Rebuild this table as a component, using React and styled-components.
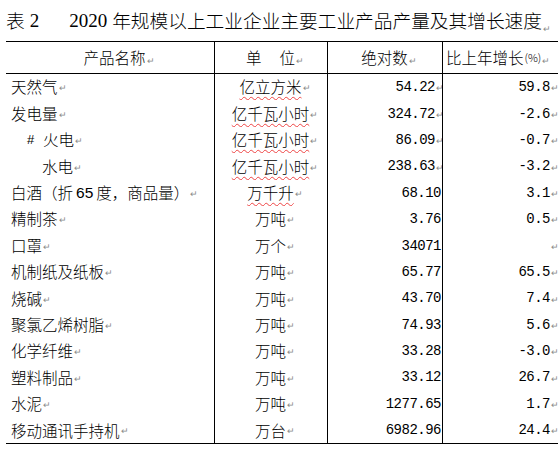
import styled, { createGlobalStyle } from "styled-components";

const GlobalStyle = createGlobalStyle`
  html, body {
    margin: 0;
    padding: 0;
    background: #fff;
    overflow: hidden;
  }
  body {
    font-family: "Noto Sans CJK SC", "Noto Sans", sans-serif;
    font-weight: 300;
    color: #000;
  }
`;

const Page = styled.div`
  width: 558px;
  height: 451px;
  padding-left: 6px;
  box-sizing: border-box;
  overflow: hidden;
`;

const Title = styled.h1`
  margin: 0;
  height: 41px;
  display: flex;
  align-items: center;
  font-size: 18.7px;
  font-weight: 300;
  line-height: 1;
  white-space: nowrap;
`;

const TitleNum = styled.span`
  font-family: "Liberation Serif", serif;
  font-size: 19px;
  margin: 0 ${(p) => p.$after}px 0 ${(p) => p.$before}px;
`;

const Table = styled.div`
  display: grid;
  grid-template-columns: 208px 113px 115px 118px;
  grid-template-rows: 32px;
  grid-auto-rows: 26.4px;
  width: max-content;
  border-top: 1px solid #000;
  border-bottom: 1px solid #000;
`;

const Cell = styled.div`
  display: flex;
  align-items: center;
  justify-content: ${(p) =>
    p.$align === "right" ? "flex-end" : p.$align === "center" ? "center" : "flex-start"};
  box-sizing: border-box;
  border-left: ${(p) => (p.$first ? "none" : "1px solid #000")};
  padding: 0 ${(p) => p.$pr || 0}px 0 ${(p) => p.$pl || 0}px;
  font-size: 15.5px;
  line-height: 1;
  white-space: nowrap;
  overflow: hidden;
`;

const HeadCell = styled(Cell)`
  border-bottom: 1px solid #000;
`;

const Num = styled.span`
  font-family: "Liberation Mono", monospace;
  font-weight: 400;
  font-size: 14px;
  letter-spacing: -0.5px;
`;

const Latin = styled.span`
  font-family: "Liberation Sans", sans-serif;
  margin: 0 3px;
`;

const Small = styled.span`
  font-size: 11px;
  margin-left: 1px;
`;

const Gap = styled.span`
  display: inline-block;
  width: ${(p) => p.$w}px;
`;

const Hash = styled.span`
  display: inline-block;
  width: 16px;
  font-family: "Liberation Sans", sans-serif;
  font-size: 13px;
`;

const Wavy = styled.span`
  text-decoration: underline wavy #e44;
  text-decoration-thickness: 1px;
  text-underline-offset: 3px;
  text-decoration-skip-ink: none;
`;

const Mark = styled.span`
  display: inline-block;
  width: ${(p) => p.$w ?? 8}px;
  overflow: visible;
  font-family: "DejaVu Sans", sans-serif;
  font-size: 9px;
  color: #8a8a8a;
  padding-left: 1px;
  align-self: flex-end;
  margin-bottom: 7px;
  white-space: nowrap;
`;

const rows = [
  { name: "天然气", unit: "亿立方米", wavy: true, value: "54.22", growth: "59.8", tail: true },
  { name: "发电量", unit: "亿千瓦小时", wavy: true, value: "324.72", growth: "-2.6", tail: true },
  { name: "火电", hash: true, unit: "亿千瓦小时", wavy: true, value: "86.09", growth: "-0.7", tail: true },
  { name: "水电", indent: 31, unit: "亿千瓦小时", wavy: true, value: "238.63", growth: "-3.2", tail: true },
  { name: "liquor", unit: "万千升", wavy: true, value: "68.10", growth: "3.1" },
  { name: "精制茶", unit: "万吨", value: "3.76", growth: "0.5" },
  { name: "口罩", unit: "万个", value: "34071", growth: "" },
  { name: "机制纸及纸板", unit: "万吨", value: "65.77", growth: "65.5" },
  { name: "烧碱", unit: "万吨", value: "43.70", growth: "7.4" },
  { name: "聚氯乙烯树脂", unit: "万吨", value: "74.93", growth: "5.6" },
  { name: "化学纤维", unit: "万吨", value: "33.28", growth: "-3.0" },
  { name: "塑料制品", unit: "万吨", value: "33.12", growth: "26.7" },
  { name: "水泥", unit: "万吨", value: "1277.65", growth: "1.7" },
  { name: "移动通讯手持机", unit: "万台", value: "6982.96", growth: "24.4" },
];

const NameText = ({ row }) => {
  if (row.name === "liquor") {
    return (
      <>
        白酒（折<Latin>65</Latin>度，商品量）
      </>
    );
  }
  if (row.hash) {
    return (
      <>
        <Hash>#</Hash>
        {row.name}
      </>
    );
  }
  return row.name;
};

const Row = ({ row }) => (
  <>
    <Cell $first $pl={row.hash ? 21 : 5 + (row.indent || 0)}>
      <NameText row={row} />
      <Mark>↵</Mark>
    </Cell>
    <Cell $align="center">
      {row.wavy ? <Wavy>{row.unit}</Wavy> : row.unit}
      <Mark $w={0}>↵</Mark>
    </Cell>
    <Cell $align="right" $pr={1}>
      <Num>{row.value}</Num>
      {row.tail && <Mark $w={5}>↵</Mark>}
    </Cell>
    <Cell $align="right" $pr={2}>
      <Num>{row.growth}</Num>
      <Mark $w={7}>↵</Mark>
    </Cell>
  </>
);

const App = () => {
  return (
    <Page>
      <GlobalStyle />
      <Title>
        表<TitleNum $before={5} $after={30}>2</TitleNum>
        <TitleNum $before={0} $after={5}>2020</TitleNum>
        年规模以上工业企业主要工业产品产量及其增长速度
        <Mark $w={8}>↵</Mark>
      </Title>
      <Table>
        <HeadCell $first $align="center" $pl={10}>
          产品名称<Mark $w={0}>↵</Mark>
        </HeadCell>
        <HeadCell $align="center">
          单<Gap $w={18} />位<Mark $w={0}>↵</Mark>
        </HeadCell>
        <HeadCell $align="center">
          绝对数<Mark $w={0}>↵</Mark>
        </HeadCell>
        <HeadCell $pl={3}>
          比上年增长<Small>(%)</Small>
          <Mark $w={8}>↵</Mark>
        </HeadCell>
        {rows.map((row) => (
          <Row key={row.name + row.value} row={row} />
        ))}
      </Table>
    </Page>
  );
};

export default App;
